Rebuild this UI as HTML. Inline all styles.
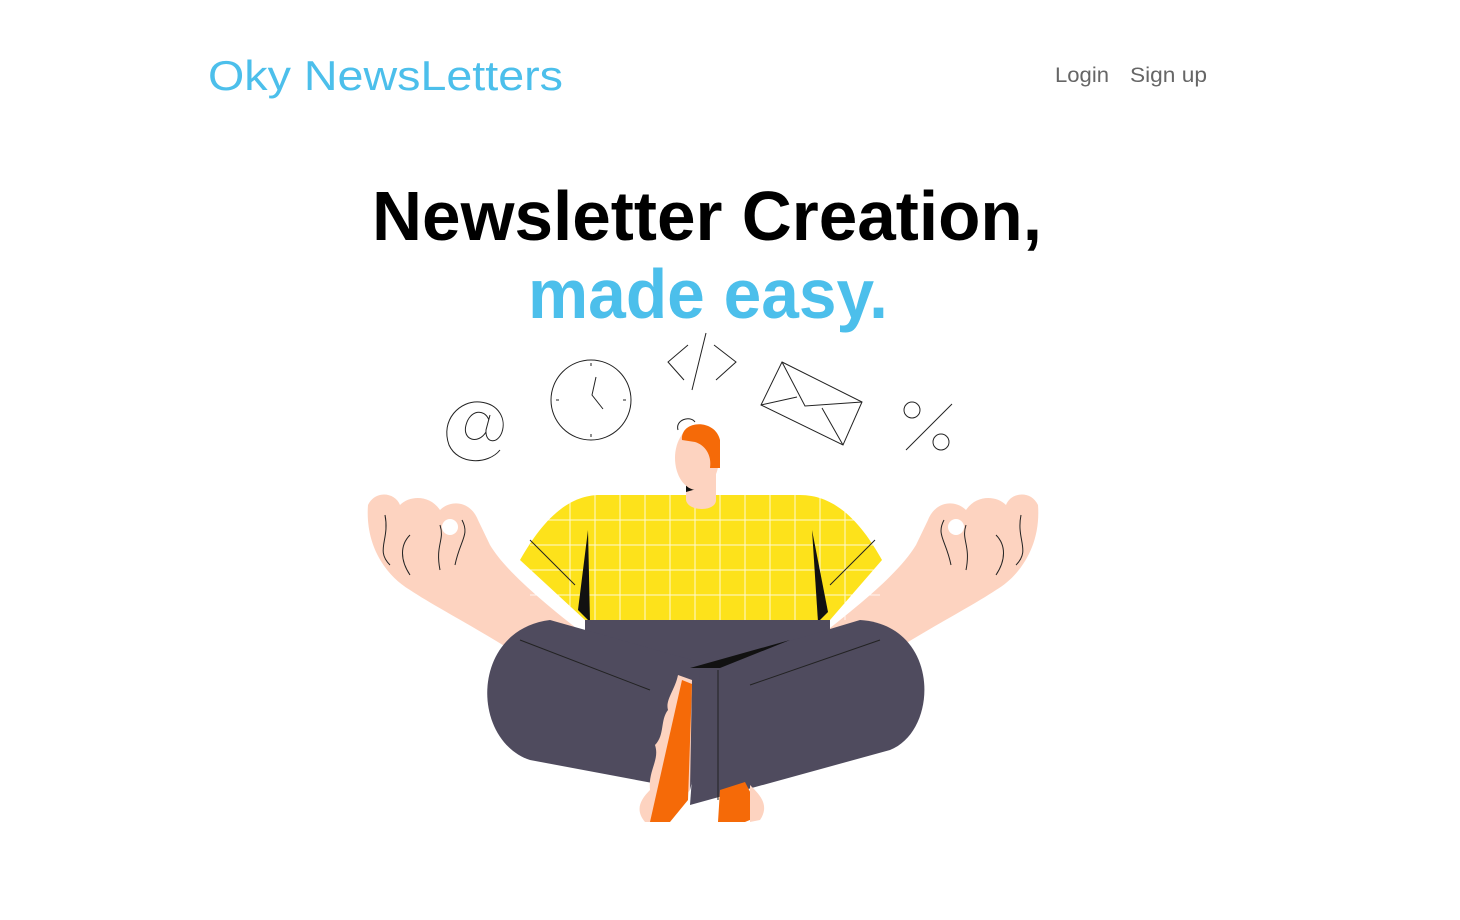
<!DOCTYPE html>
<html><head><meta charset="utf-8"><style>
html,body{margin:0;padding:0;background:#fff;width:1460px;height:920px;overflow:hidden}
svg{display:block}
</style></head><body>
<svg width="1460" height="920" viewBox="0 0 1460 920" xmlns="http://www.w3.org/2000/svg">
<text x="208" y="90" font-family="Liberation Sans, sans-serif" font-size="42" fill="#4cbfeb" textLength="355" lengthAdjust="spacingAndGlyphs">Oky NewsLetters</text>
<text x="1055" y="82" font-family="Liberation Sans, sans-serif" font-size="21" fill="#666" textLength="54" lengthAdjust="spacingAndGlyphs">Login</text>
<text x="1130" y="82" font-family="Liberation Sans, sans-serif" font-size="21" fill="#666" textLength="77" lengthAdjust="spacingAndGlyphs">Sign up</text>
<text x="372" y="240" font-family="Liberation Sans, sans-serif" font-weight="bold" font-size="70" fill="#000" textLength="670" lengthAdjust="spacingAndGlyphs">Newsletter Creation,</text>
<text x="528" y="318" font-family="Liberation Sans, sans-serif" font-weight="bold" font-size="70" fill="#4cbfeb" textLength="360" lengthAdjust="spacingAndGlyphs">made easy.</text>

<g fill="none" stroke="#222" stroke-width="1">
  <!-- @ -->
  <path d="M500 450 C488 465 458 465 449 445 C440 420 460 400 480 402 C500 404 506 420 502 432 C498 444 485 444 486 430 L490 415 M489 420 C484 408 470 410 466 425 C462 440 478 445 486 432"/>
  <!-- clock -->
  <circle cx="591" cy="400" r="40"/>
  <path d="M596 377 L592 395 L603 409"/>
  <path d="M591 363 v3 M591 434 v3 M556 400 h3 M623 400 h3"/>
  <!-- code -->
  <path d="M688 345 L668 362 L684 380 M714 345 L736 362 L716 380 M706 333 L692 390"/>
  <!-- envelope -->
  <path d="M782 362 L862 402 L843 445 L761 405 Z M782 362 L805 406 L862 402 M761 405 L797 397 M843 445 L822 408"/>
  <!-- percent -->
  <circle cx="912" cy="410" r="8"/><circle cx="941" cy="442" r="8"/>
  <path d="M906 450 L952 404"/>
</g>

<!-- arms / hands -->
<g fill="#fdd3c0">
  <path d="M368 505 C375 490 395 492 400 505 C410 495 430 495 440 510 C450 500 470 500 478 520 L490 545 C505 570 540 600 585 635 L540 670 C500 640 440 610 410 590 C385 575 365 545 368 505 Z"/>
  <path d="M1038 505 C1031 490 1011 492 1006 505 C996 495 976 495 966 510 C956 500 936 500 928 520 L916 545 C901 570 866 600 821 635 L866 670 C906 640 966 610 996 590 C1021 575 1041 545 1038 505 Z"/>
</g>
<circle cx="450" cy="527" r="8" fill="#fff"/>
<circle cx="956" cy="527" r="8" fill="#fff"/>
<g fill="none" stroke="#222" stroke-width="1">
  <path d="M385 515 C390 540 375 550 390 565 M410 535 C400 545 400 560 410 575 M440 525 C445 540 435 545 440 570 M462 520 C470 535 460 540 455 565"/>
  <path d="M1021 515 C1016 540 1031 550 1016 565 M996 535 C1006 545 1006 560 996 575 M966 525 C961 540 971 545 966 570 M944 520 C936 535 946 540 951 565"/>
</g>

<!-- shirt -->
<path d="M600 495 L800 495 C840 495 865 530 882 560 L830 620 L585 620 L520 560 C540 525 565 495 600 495 Z" fill="#fde21b"/>
<g stroke="#fff" stroke-width="1" opacity="0.8">
  <path d="M530 520 H880 M530 545 H880 M530 570 H880 M530 595 H880"/>
  <path d="M570 495 V620 M595 495 V620 M620 495 V620 M645 495 V620 M670 495 V620 M695 495 V620 M720 495 V620 M745 495 V620 M770 495 V620 M795 495 V620 M820 495 V620 M845 495 V620"/>
</g>
<path d="M588 530 L578 610 L590 622 Z" fill="#111"/>
<path d="M812 530 L828 612 L818 622 Z" fill="#111"/>
<path d="M530 540 L575 585 M875 540 L830 585" stroke="#222" stroke-width="1"/>

<!-- neck/head -->
<path d="M686 470 L716 470 L716 500 C716 512 688 512 686 500 Z" fill="#fdd3c0"/>
<path d="M686 478 L700 488 L686 492 Z" fill="#111"/>
<ellipse cx="697" cy="458" rx="22" ry="32" fill="#fdd3c0"/>
<path d="M682 440 C680 420 715 418 720 440 L720 468 L710 468 C712 455 705 445 695 442 Z" fill="#f56a08"/>
<path d="M678 430 C675 420 690 415 695 422" fill="none" stroke="#222" stroke-width="1"/>

<!-- pants -->
<rect x="585" y="620" width="245" height="50" fill="#4f4b5e"/>
<path d="M550 620 L720 668 L690 790 L530 760 C470 740 470 630 550 620 Z" fill="#4f4b5e"/>
<path d="M860 620 L700 668 L690 805 L890 750 C940 730 940 625 860 620 Z" fill="#4f4b5e"/>
<path d="M690 668 L790 640 L720 668 Z" fill="#111"/>
<path d="M520 640 L650 690 M880 640 L750 685 M718 670 V800" stroke="#222" stroke-width="1"/>

<!-- feet -->
<path d="M678 675 L692 680 L690 790 L665 822 L645 822 C635 810 640 800 650 790 C648 770 660 760 655 745 C665 735 660 720 668 710 C665 700 675 690 678 675 Z" fill="#fdd3c0"/>
<path d="M682 680 L692 684 L688 800 L670 822 L650 822 Z" fill="#f56a08"/>
<path d="M720 790 L745 782 L762 815 L745 822 L718 822 Z" fill="#f56a08"/>
<path d="M750 785 C760 795 770 805 760 820 L750 822 Z" fill="#fdd3c0"/>
</svg>
</body></html>
